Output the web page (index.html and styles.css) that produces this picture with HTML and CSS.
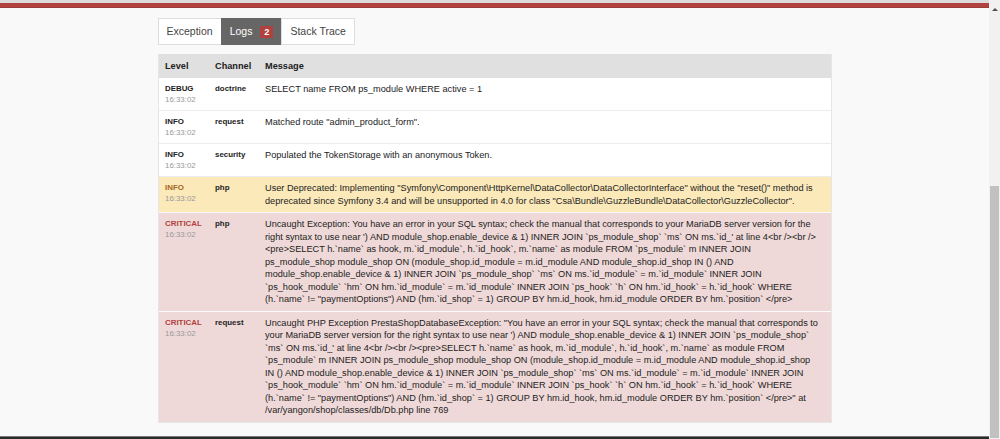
FILE: index.html
```html
<!DOCTYPE html>
<html lang="en">
<head>
<meta charset="utf-8">
<title>Logs</title>
<link rel="stylesheet" href="styles.css">
</head>
<body>
<div class="window">
  <div class="viewport">
    <div class="summary-edge"></div>
    <div class="container">
      <ul class="tabs">
        <li class="tab">Exception</li>
        <li class="tab active">Logs <span class="badge">2</span></li>
        <li class="tab">Stack Trace</li>
      </ul>
      <div class="logs">
        <div class="log-row log-head">
          <div class="cell">Level</div>
          <div class="cell">Channel</div>
          <div class="cell">Message</div>
        </div>
        <div class="log-row">
          <div class="cell"><span class="level">DEBUG</span><span class="time">16:33:02</span></div>
          <div class="cell channel">doctrine</div>
          <div class="cell message">SELECT name FROM ps_module WHERE active = 1</div>
        </div>
        <div class="log-row">
          <div class="cell"><span class="level">INFO</span><span class="time">16:33:02</span></div>
          <div class="cell channel">request</div>
          <div class="cell message">Matched route "admin_product_form".</div>
        </div>
        <div class="log-row">
          <div class="cell"><span class="level">INFO</span><span class="time">16:33:02</span></div>
          <div class="cell channel">security</div>
          <div class="cell message">Populated the TokenStorage with an anonymous Token.</div>
        </div>
        <div class="log-row warning">
          <div class="cell"><span class="level">INFO</span><span class="time">16:33:02</span></div>
          <div class="cell channel">php</div>
          <div class="cell message">User Deprecated: Implementing "Symfony\Component\HttpKernel\DataCollector\DataCollectorInterface" without the "reset()" method is<br>deprecated since Symfony 3.4 and will be unsupported in 4.0 for class "Csa\Bundle\GuzzleBundle\DataCollector\GuzzleCollector".</div>
        </div>
        <div class="log-row error">
          <div class="cell"><span class="level">CRITICAL</span><span class="time">16:33:02</span></div>
          <div class="cell channel">php</div>
          <div class="cell message">Uncaught Exception: You have an error in your SQL syntax; check the manual that corresponds to your MariaDB server version for the<br>right syntax to use near ') AND module_shop.enable_device &amp; 1) INNER JOIN `ps_module_shop` `ms` ON ms.`id_' at line 4&lt;br /&gt;&lt;br /&gt;<br>&lt;pre&gt;SELECT h.`name` as hook, m.`id_module`, h.`id_hook`, m.`name` as module FROM `ps_module` m INNER JOIN<br>ps_module_shop module_shop ON (module_shop.id_module = m.id_module AND module_shop.id_shop IN () AND<br>module_shop.enable_device &amp; 1) INNER JOIN `ps_module_shop` `ms` ON ms.`id_module` = m.`id_module` INNER JOIN<br>`ps_hook_module` `hm` ON hm.`id_module` = m.`id_module` INNER JOIN `ps_hook` `h` ON hm.`id_hook` = h.`id_hook` WHERE<br>(h.`name` != "paymentOptions") AND (hm.`id_shop` = 1) GROUP BY hm.id_hook, hm.id_module ORDER BY hm.`position` &lt;/pre&gt;</div>
        </div>
        <div class="log-row error">
          <div class="cell"><span class="level">CRITICAL</span><span class="time">16:33:02</span></div>
          <div class="cell channel">request</div>
          <div class="cell message">Uncaught PHP Exception PrestaShopDatabaseException: "You have an error in your SQL syntax; check the manual that corresponds to<br>your MariaDB server version for the right syntax to use near ') AND module_shop.enable_device &amp; 1) INNER JOIN `ps_module_shop`<br>`ms` ON ms.`id_' at line 4&lt;br /&gt;&lt;br /&gt;&lt;pre&gt;SELECT h.`name` as hook, m.`id_module`, h.`id_hook`, m.`name` as module FROM<br>`ps_module` m INNER JOIN ps_module_shop module_shop ON (module_shop.id_module = m.id_module AND module_shop.id_shop<br>IN () AND module_shop.enable_device &amp; 1) INNER JOIN `ps_module_shop` `ms` ON ms.`id_module` = m.`id_module` INNER JOIN<br>`ps_hook_module` `hm` ON hm.`id_module` = m.`id_module` INNER JOIN `ps_hook` `h` ON hm.`id_hook` = h.`id_hook` WHERE<br>(h.`name` != "paymentOptions") AND (hm.`id_shop` = 1) GROUP BY hm.id_hook, hm.id_module ORDER BY hm.`position` &lt;/pre&gt;" at<br>/var/yangon/shop/classes/db/Db.php line 769</div>
        </div>
      </div>
    </div>
    <div class="taskbar"></div>
  </div>
  <div class="scrollbar">
    <span class="scroll-arrow"></span>
    <div class="thumb"></div>
  </div>
</div>
</body>
</html>
```
FILE: styles.css
```css
* { box-sizing: border-box; }
html, body { margin: 0; padding: 0; }
body {
  font-family: "Liberation Sans", Arial, Helvetica, sans-serif;
  color: #222;
  background: #f9f9f9;
  overflow: hidden;
}
.window { display: flex; width: 1000px; height: 439px; }
.viewport { flex: 1; display: flex; flex-direction: column; min-width: 0; }
.summary-edge {
  height: 8px;
  background: #b0413e;
  border-top: 3px solid #dcdcdc;
  border-bottom: 1px solid #9d3b38;
}
.container { flex: 1; width: 674px; margin: 0 auto; padding-top: 10px; }
.taskbar { height: 3px; background: #2b2b2b; border-top: 1px solid #777; }

.tabs { display: flex; list-style: none; margin: 0 0 9px; padding: 0; }
.tab {
  background: #fff;
  border: 1px solid #ddd;
  color: #444;
  font-size: 10.5px;
  line-height: 15px;
  padding: 5px 8px;
  margin-left: -1px;
  white-space: nowrap;
}
.tab:first-child { margin-left: 0; }
.tab.active { background: #666; border-color: #666; color: #fff; }
.badge {
  display: inline-block;
  margin-left: 5px;
  padding: 1px 4px;
  min-width: 13px;
  text-align: center;
  font-size: 9.2px;
  line-height: 10px;
  font-weight: bold;
  background: #b0413e;
  color: #fff;
}

.logs { background: #fff; border: 1px solid #e6e6e6; border-top: 0; }
.log-row {
  display: grid;
  grid-template-columns: 50px 50px 1fr;
  border-bottom: 1px solid #ececec;
}
.log-row:last-child { border-bottom: 0; }
.cell { padding: 5px 6.5px; font-size: 9.2px; line-height: 12.5px; }
.log-head { background: #e0e0e0; border-bottom: 0; }
.log-head .cell { font-weight: bold; line-height: 13px; padding: 5.5px 6.5px; }
.level { display: block; font-size: 7.9px; line-height: 11px; font-weight: bold; white-space: nowrap; }
.time { display: block; font-size: 7.9px; line-height: 11px; color: #999; }
.channel { font-size: 7.9px; line-height: 11px; font-weight: bold; }
.message { white-space: nowrap; }
.warning { background: #fbe9ba; border-bottom-color: #fafafa; }
.warning .level { color: #a46a1f; }
.error { background: #efd9d8; border-bottom-color: #fafafa; }
.error .level { color: #b0413e; }

.scrollbar {
  width: 11px;
  background: #f1f1f1;
  display: flex;
  flex-direction: column;
  align-items: center;
}
.scroll-arrow {
  margin-top: 8px;
  width: 0;
  height: 0;
  border-left: 3px solid transparent;
  border-right: 3px solid transparent;
  border-bottom: 3px solid #505050;
}
.thumb { margin-top: auto; margin-bottom: 1px; width: 9px; height: 252px; background: #c1c1c1; }
```
